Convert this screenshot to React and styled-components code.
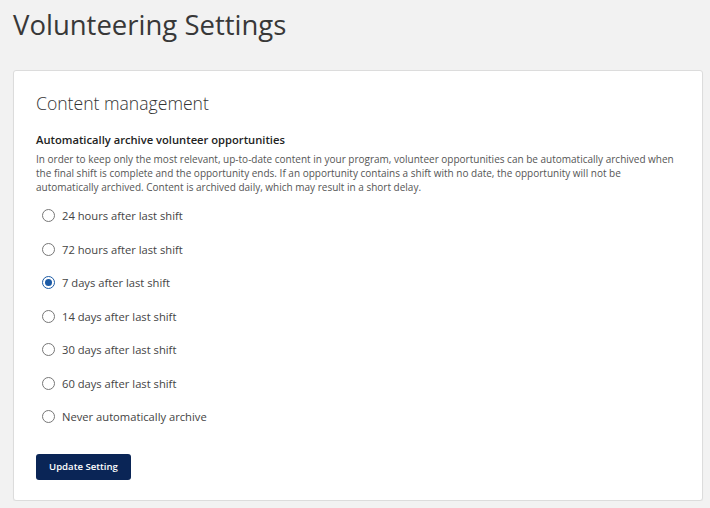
import React, { useState } from "react";
import styled, { createGlobalStyle } from "styled-components";

const Global = createGlobalStyle`
  html, body { margin: 0; padding: 0; background: #f2f2f2; }
  body { font-family: "Open Sans", "Liberation Sans", sans-serif; color: #333; }
  * { box-sizing: border-box; }
`;

const Page = styled.div`
  padding: 9px 7px 0 13px;
`;

const Title = styled.h1`
  margin: 0;
  font-size: 27.5px;
  font-weight: 400;
  line-height: 32px;
  color: #383838;
`;

const Card = styled.section`
  margin-top: 29px;
  background: #fff;
  border: 1px solid #dcdcdc;
  border-radius: 3px;
  padding: 20px 22px 20px 22px;
  box-shadow: 0 1px 1px rgba(0,0,0,0.04);
`;

const CardTitle = styled.h2`
  margin: 0;
  font-size: 17.6px;
  font-weight: 300;
  line-height: 24px;
  color: #333;
`;

const FieldLabel = styled.h3`
  margin: 18px 0 0;
  font-size: 11.2px;
  font-weight: 600;
  line-height: 14px;
  color: #222;
`;

const Description = styled.p`
  margin: 5px 0 0;
  font-size: 10px;
  line-height: 14px;
  color: #555;
`;

const Options = styled.div`
  display: flex;
  flex-direction: column;
  margin-top: 5px;
`;

const Option = styled.label`
  display: flex;
  align-items: center;
  gap: 7px;
  height: 33.5px;
  padding-left: 6px;
  font-size: 11.2px;
  color: #444;
  cursor: pointer;
`;

const Radio = styled.span`
  width: 13px;
  height: 13px;
  border-radius: 50%;
  border: 1px solid ${p => (p.$checked ? "#1b5aa5" : "#777")};
  display: flex;
  align-items: center;
  justify-content: center;
  flex: none;
  &::after {
    content: "";
    width: 7px;
    height: 7px;
    border-radius: 50%;
    background: #1b5aa5;
    display: ${p => (p.$checked ? "block" : "none")};
  }
`;

const Button = styled.button`
  margin-top: 20px;
  height: 26px;
  padding: 0 13px;
  background: #0a2556;
  color: #fff;
  border: none;
  border-radius: 3px;
  font-family: inherit;
  font-size: 9.6px;
  font-weight: 600;
  cursor: pointer;
`;

const options = [
  "24 hours after last shift",
  "72 hours after last shift",
  "7 days after last shift",
  "14 days after last shift",
  "30 days after last shift",
  "60 days after last shift",
  "Never automatically archive",
];

export default function App() {
  const [sel, setSel] = useState(2);
  return (
    <>
      <Global />
      <Page>
        <Title>Volunteering Settings</Title>
        <Card>
          <CardTitle>Content management</CardTitle>
          <FieldLabel>Automatically archive volunteer opportunities</FieldLabel>
          <Description>
            In order to keep only the most relevant, up-to-date content in your program, volunteer opportunities can be automatically archived when the final shift is complete and the opportunity ends. If an opportunity contains a shift with no date, the opportunity will not be automatically archived. Content is archived daily, which may result in a short delay.
          </Description>
          <Options>
            {options.map((o, i) => (
              <Option key={o} onClick={() => setSel(i)}>
                <Radio $checked={sel === i} />
                {o}
              </Option>
            ))}
          </Options>
          <Button>Update Setting</Button>
        </Card>
      </Page>
    </>
  );
}
